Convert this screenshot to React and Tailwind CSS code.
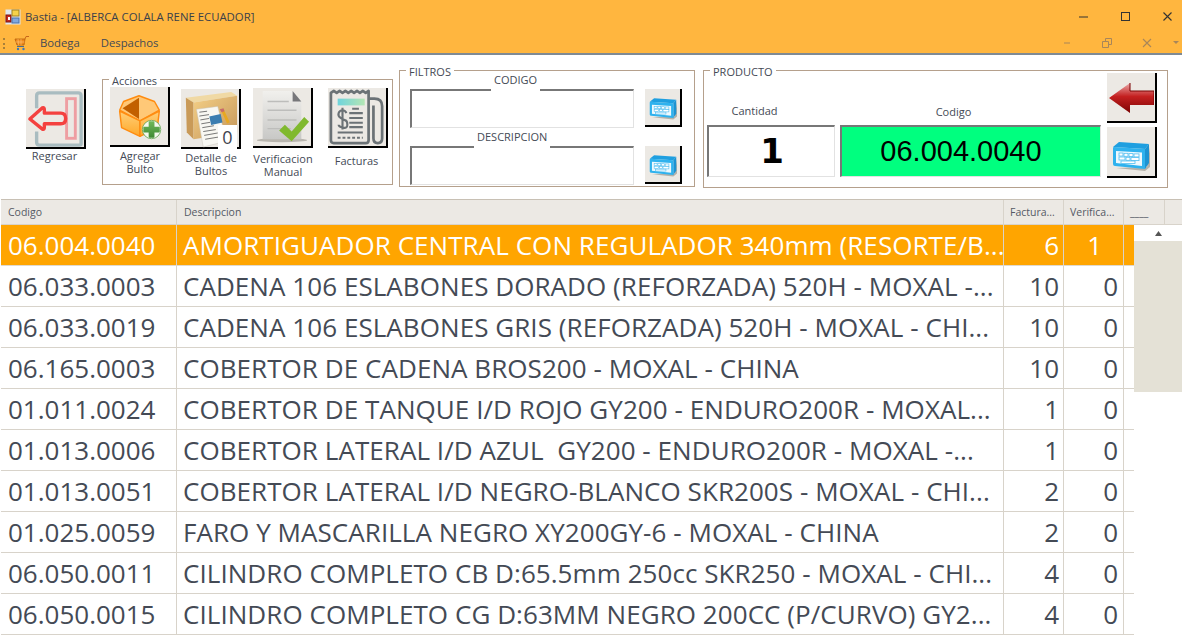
const font = { fontFamily: '"Open Sans", "Noto Sans", sans-serif' };

const rows = [
  ['06.004.0040', 'AMORTIGUADOR CENTRAL CON REGULADOR 340mm (RESORTE/B...', '6', '1'],
  ['06.033.0003', 'CADENA 106 ESLABONES DORADO (REFORZADA) 520H - MOXAL -...', '10', '0'],
  ['06.033.0019', 'CADENA 106 ESLABONES GRIS (REFORZADA) 520H - MOXAL - CHI...', '10', '0'],
  ['06.165.0003', 'COBERTOR DE CADENA BROS200 - MOXAL - CHINA', '10', '0'],
  ['01.011.0024', 'COBERTOR DE TANQUE I/D ROJO GY200 - ENDURO200R - MOXAL...', '1', '0'],
  ['01.013.0006', 'COBERTOR LATERAL I/D AZUL  GY200 - ENDURO200R - MOXAL -...', '1', '0'],
  ['01.013.0051', 'COBERTOR LATERAL I/D NEGRO-BLANCO SKR200S - MOXAL - CHI...', '2', '0'],
  ['01.025.0059', 'FARO Y MASCARILLA NEGRO XY200GY-6 - MOXAL - CHINA', '2', '0'],
  ['06.050.0011', 'CILINDRO COMPLETO CB D:65.5mm 250cc SKR250 - MOXAL - CHI...', '4', '0'],
  ['06.050.0015', 'CILINDRO COMPLETO CG D:63MM NEGRO 200CC (P/CURVO) GY2...', '4', '0'],
];

function AppIcon() {
  return (
    <svg width="16" height="16" viewBox="0 0 16 16">
      <rect x="0.5" y="0.5" width="15" height="15" fill="#dfe6ee" />
      <rect x="1" y="6" width="5" height="7" fill="#c8281e" stroke="#7a1510" />
      <rect x="3" y="8" width="2" height="3" fill="#fff" />
      <rect x="7" y="1" width="7" height="6" fill="#f6d24a" stroke="#a08020" />
      <rect x="7" y="9" width="7" height="5" fill="#7fa8e0" stroke="#4a70a8" />
    </svg>
  );
}

function CartIcon() {
  return (
    <svg width="16" height="16" viewBox="0 0 16 16">
      <path d="M1 4h10l-1 6H3z" fill="#f08a1c" stroke="#b85f0a" strokeWidth="0.8" />
      <path d="M4 4l.5 6M7 4v6M1.500 7h9" stroke="#ffc878" strokeWidth="0.6" />
      <path d="M11 4l1-2.500h3" fill="none" stroke="#c8681a" strokeWidth="1" />
      <path d="M3 11.500h7" stroke="#4a6a88" strokeWidth="1" />
      <circle cx="4" cy="14" r="1.200" fill="#3a78b8" />
      <circle cx="9.500" cy="14" r="1.200" fill="#3a78b8" />
    </svg>
  );
}

function BackIcon() {
  return (
    <svg width="60" height="60" viewBox="0 0 60 60">
      <path d="M11 20V7q0-3 3-3h40q3 0 3 3v50q0 1-2 1H14q-3 0-3-3V44" fill="none" stroke="#a9bcc0" strokeWidth="3.500" />
      <rect x="42" y="10" width="9" height="41" fill="#ece9e4" stroke="#ee9ea2" strokeWidth="3" />
      <path d="M4 31L17 19.500q2-1 2 2V25h17q5 0 5 5.500t-5 5.500H19v3.500q0 3-2 2z" fill="#ece9e4" stroke="#f4413f" strokeWidth="3.500" strokeLinejoin="round" />
    </svg>
  );
}

function BoxIcon() {
  return (
    <svg width="60" height="60" viewBox="0 0 60 60">
      <defs>
        <linearGradient id="boxFront" x1="0" y1="0" x2="0" y2="1">
          <stop offset="0" stopColor="#ffcf78" />
          <stop offset="1" stopColor="#ffa92a" />
        </linearGradient>
        <linearGradient id="plusFill" x1="0" y1="0" x2="0" y2="1">
          <stop offset="0" stopColor="#6fb85a" />
          <stop offset="1" stopColor="#3f8a34" />
        </linearGradient>
      </defs>
      <path d="M10 24l4-9 16-6 16 6 5 9-20 11z" fill="#ffc877" stroke="#ff8c10" strokeWidth="1.500" strokeLinejoin="round" />
      <path d="M13 22l17-11v22z" fill="#c26000" />
      <path d="M10 25l21 10v16l-19-9z" fill="url(#boxFront)" stroke="#ff8c10" strokeWidth="1.500" strokeLinejoin="round" />
      <path d="M31 35l20-10-2 17-18 9z" fill="url(#boxFront)" stroke="#ff8c10" strokeWidth="1.500" strokeLinejoin="round" />
      <circle cx="43" cy="44" r="9.500" fill="#f4f8ee" stroke="#5aa04a" strokeWidth="0.800" />
      <path d="M40 36.500q0-1 1-1h4q1 0 1 1V41h4.500q1 0 1 1v4q0 1-1 1H46v4.500q0 1-1 1h-4q-1 0-1-1V47h-4.500q-1 0-1-1v-4q0-1 1-1H40z" fill="url(#plusFill)" />
    </svg>
  );
}

function FolderIcon() {
  return (
    <svg width="60" height="60" viewBox="0 0 60 60">
      <defs>
        <linearGradient id="folderFill" x1="0" y1="0" x2="1" y2="1">
          <stop offset="0" stopColor="#f4cf86" />
          <stop offset="1" stopColor="#c4965a" />
        </linearGradient>
      </defs>
      <path d="M5 9L52 3l6 4-45 7z" fill="#f0d9a4" />
      <path d="M5 9l8 5v38l-7-7z" fill="#c99a58" />
      <path d="M13 14l45-7v38l-45 7z" fill="url(#folderFill)" />
      <path d="M16 21l22-3 9 36-24 6z" fill="#f8f7f2" stroke="#c8c4ba" strokeWidth="0.500" />
      <path d="M19 24l8-1M19 28l10-1.500M20 32l9-1.500M21 36l9-1.500M22 40l12-2M23 44l13-2M24 48l14-2.500M25 52l15-2.500" stroke="#666" strokeWidth="0.900" />
      <rect x="30" y="27" width="12" height="9" fill="#3b7db0" transform="rotate(-12 36 31)" />
      <path d="M43 22l6 13" stroke="#e8a820" strokeWidth="3" />
      <path d="M40 21l4-1 1 3-3 1z" fill="#c86a6a" />
    </svg>
  );
}

function CheckDocIcon() {
  return (
    <svg width="60" height="60" viewBox="0 0 60 60">
      <defs>
        <linearGradient id="docFill" x1="0" y1="0" x2="0" y2="1">
          <stop offset="0" stopColor="#f1f0ed" />
          <stop offset="1" stopColor="#c8c8c6" />
        </linearGradient>
      </defs>
      <ellipse cx="30" cy="54" rx="26" ry="2" fill="#b8b5ae" />
      <path d="M10 3h31l9 11v39H10z" fill="url(#docFill)" />
      <path d="M41 3l9 11h-9z" fill="#77777a" />
      <path d="M15 14h22M15 23h30M15 33h30M15 42h24" stroke="#bdbdbb" strokeWidth="1.500" />
      <path d="M27 44l6-6 7 7 13-15 5 5-18 20z" fill="#80b92e" />
    </svg>
  );
}

function ReceiptIcon() {
  return (
    <svg width="60" height="60" viewBox="0 0 60 60" fill="none" stroke="#6b7276">
      <defs>
        <linearGradient id="tealBar" x1="0" y1="0" x2="1" y2="0">
          <stop offset="0" stopColor="#6fd4dc" />
          <stop offset="1" stopColor="#b4e6b4" />
        </linearGradient>
      </defs>
      <path d="M3 5l3-2 3 2 3-2 3 2 3-2 3 2 3-2 3 2 3-2 3 2 3-2 3 2 3-2v51q0 3-3 3H6q-3 0-3-3z" strokeWidth="2.800" strokeLinejoin="round" />
      <path d="M42 11h6q8 0 8 8v33q0 5-4.500 5T47 52V18" strokeWidth="2.800" />
      <path d="M10 11h28v7H10z" fill="url(#tealBar)" stroke="none" />
      <path d="M25 21.500h7M22 26h14M22 31h14M22 36h14M22 40.500h14M10 46h26" strokeWidth="2.200" />
      <path d="M10 51.500h26" strokeWidth="2.200" strokeDasharray="3 2" />
      <path d="M19 26q-1-3-4-3t-4 3 2 5 5 2.500 2 4.500-4.500 3-4.500-3M15 20.500v22.500" strokeWidth="2.200" />
    </svg>
  );
}

function KeyboardIcon({ width = 38, height = 30 }) {
  return (
    <svg width={width} height={height} viewBox="0 0 38 30">
      <path d="M4 27l29 3 5-4V6l-3 20z" fill="#b4b2aa" />
      <path d="M1 6l6-5 30 2-4 5z" fill="#1f9fe0" />
      <path d="M33 8l4-5v19l-4 6z" fill="#1c93d2" />
      <path d="M1 7q0-1 1-1l31 2v20L3 25q-2 0-2-2z" fill="#2fb2ee" />
      <path d="M4 10l26 1.500V25L4 22z" fill="#eef9fe" />
      <g fill="#fff" stroke="#4fbdf0" strokeWidth="0.800">
        <rect x="7" y="12" width="4" height="3" />
        <rect x="12" y="12.300" width="4" height="3" />
        <rect x="17" y="12.600" width="4" height="3" />
        <rect x="22" y="12.900" width="5" height="3" />
        <rect x="7" y="16" width="6" height="3" />
        <rect x="14" y="16.300" width="4" height="3" />
        <rect x="19" y="16.600" width="8" height="3" />
        <rect x="9" y="20" width="14" height="2.500" />
      </g>
    </svg>
  );
}

function RedArrowIcon() {
  return (
    <svg width="46" height="32" viewBox="0 0 46 32">
      <defs>
        <linearGradient id="arrowFill" x1="0" y1="0" x2="0" y2="1">
          <stop offset="0" stopColor="#eaa8a8" />
          <stop offset="0.450" stopColor="#c42020" />
          <stop offset="1" stopColor="#7c0404" />
        </linearGradient>
      </defs>
      <path d="M1 16L22 1v8h24v14H22v8z" fill="url(#arrowFill)" />
      <path d="M22 1v8h24M46 9v14" fill="none" stroke="#7a0000" />
    </svg>
  );
}

// boton con relieve estilo WinForms
function ToolButton({ className, children }) {
  return (
    <div className={`flex items-center justify-center bg-[#ece9e4] border-r-2 border-b-2 border-black ${className}`}>
      {children}
    </div>
  );
}

function Action({ icon, label, className, labelClass, badge }) {
  return (
    <div className={`flex flex-col items-center ${className}`}>
      <div className="relative">
        <ToolButton className="w-[60px] h-[60px] box-border">{icon}</ToolButton>
        {badge && (
          <span className="absolute right-[4px] bottom-0 w-[19px] h-[24px] bg-white text-[18px] leading-[24px] text-center text-[#3f4450]">
            {badge}
          </span>
        )}
      </div>
      <div className={`text-[11px] leading-[13px] text-center text-[#444a55] whitespace-pre-line ${labelClass}`}>{label}</div>
    </div>
  );
}

function Group({ title, className, children }) {
  return (
    <div className={`relative border border-[#b5a08c] box-border ${className}`}>
      <span className="absolute left-[6px] -top-[6px] bg-white px-[3px] text-[11px] leading-[14px] text-[#444a55]">{title}</span>
      {children}
    </div>
  );
}

function FilterInput({ label, labelClass }) {
  return (
    <div className="relative w-[224px] h-[39px] border-t-2 border-l-2 border-t-[#777] border-l-[#777] border-r border-b border-r-[#e2e2e2] border-b-[#e2e2e2] bg-white box-border">
      <span className={`absolute -top-[18px] bg-white text-[11px] leading-[14px] px-[3px] pb-[6px] text-[#444a55] ${labelClass}`}>{label}</span>
    </div>
  );
}

function Cell({ className, children }) {
  return <div className={`h-full flex items-center border-r overflow-hidden whitespace-pre ${className}`}>{children}</div>;
}

export default function App() {
  return (
    <div className="w-[1182px] h-[638px] overflow-hidden bg-white flex flex-col" style={font}>
      {/* titulo */}
      <div className="h-[33px] bg-[#ffb63f] flex items-center pl-[5px] shrink-0">
        <AppIcon />
        <span className="ml-[4px] text-[11.350px] text-[#3a3f4a] font-medium">Bastia - [ALBERCA COLALA RENE ECUADOR]</span>
        <div className="ml-auto flex items-center gap-[31px] pr-[9px] text-[#222]">
          <svg width="11" height="11" viewBox="0 0 11 11"><path d="M1 6h9" stroke="#333" strokeWidth="1" /></svg>
          <svg width="11" height="11" viewBox="0 0 11 11"><rect x="1.500" y="1.500" width="8" height="8" fill="none" stroke="#333" strokeWidth="1" /></svg>
          <svg width="11" height="11" viewBox="0 0 11 11"><path d="M1.500 1.500l8 8M9.500 1.500l-8 8" stroke="#333" strokeWidth="1.100" /></svg>
        </div>
      </div>

      {/* menu */}
      <div className="h-[22px] bg-[#ffb63f] border-b-2 border-b-[#7f8a94] flex items-center pl-[3px] shrink-0 box-border">
        <div className="w-[2px] h-[11px] border-l-2 border-dotted border-[#a8803a]" />
        <span className="ml-[9px]"><CartIcon /></span>
        <span className="ml-[10px] text-[11.300px] text-[#444a55]">Bodega</span>
        <span className="ml-[21px] text-[11.300px] text-[#444a55]">Despachos</span>
        <div className="ml-auto flex items-center gap-[30px] pr-[2px]">
          <svg width="10" height="10" viewBox="0 0 10 10"><path d="M2 5h6" stroke="#a8865a" /></svg>
          <svg width="10" height="10" viewBox="0 0 10 10" fill="none" stroke="#a8865a"><path d="M.5 3.500h6v6h-6zM3.500 3V.5h6v6H7" /></svg>
          <svg width="10" height="10" viewBox="0 0 10 10"><path d="M1 1l8 8M9 1l-8 8" stroke="#a8865a" strokeWidth="1.100" /></svg>
          <svg className="-ml-[9px]" width="7" height="4" viewBox="0 0 7 4"><path d="M0 0h6L3 3z" fill="#a8865a" /></svg>
        </div>
      </div>

      {/* barra de acciones */}
      <div className="h-[144px] flex items-start shrink-0">
        <Action icon={<BackIcon />} label="Regresar" className="ml-[26px] mt-[34px] w-[60px]" labelClass="mr-[3px]" />

        <Group title="Acciones" className="ml-[16px] mt-[24px] w-[291px] h-[106px] flex items-start">
          <Action icon={<BoxIcon />} label={'Agregar\nBulto'} className="ml-[7px] mt-[7px] w-[60px]" labelClass="mt-[2px]" />
          <Action icon={<FolderIcon />} label={'Detalle de\nBultos'} className="ml-[11px] mt-[9px] w-[60px]" labelClass="mt-[2px]" badge="0" />
          <Action icon={<CheckDocIcon />} label={'Verificacion\nManual'} className="ml-[12px] mt-[8px] w-[60px]" labelClass="mt-[4px]" />
          <Action icon={<ReceiptIcon />} label="Facturas" className="ml-[15px] mt-[8px] w-[60px]" labelClass="mt-[6px] -ml-[3px]" />
        </Group>

        <Group title="FILTROS" className="ml-[6px] mt-[15px] w-[296px] h-[117px] pl-[10px] pt-[18px] flex flex-col gap-[18px]">
          <div className="flex items-start gap-[11px]">
            <FilterInput label="CODIGO" labelClass="left-[79px]" />
            <ToolButton className="w-[37px] h-[38px] box-border pt-[3px]"><KeyboardIcon width={28} height={23} /></ToolButton>
          </div>
          <div className="flex items-start gap-[11px]">
            <FilterInput label="DESCRIPCION" labelClass="left-[62px]" />
            <ToolButton className="w-[37px] h-[38px] box-border pt-[3px]"><KeyboardIcon width={28} height={23} /></ToolButton>
          </div>
        </Group>

        <Group title="PRODUCTO" className="ml-[8px] mt-[15px] w-[465px] h-[118px] pl-[3px] flex items-start">
          <div className="w-[128px] mt-[33px] flex flex-col items-center">
            <span className="text-[11px] leading-[14px] text-[#444a55] mr-[33px]">Cantidad</span>
            <div className="mt-[7px] w-[128px] h-[52px] border-t-2 border-l-2 border-t-[#777] border-l-[#777] border-r border-b border-r-[#e2e2e2] border-b-[#e2e2e2] box-border flex items-center justify-center pl-[1px] text-[34px] font-bold text-black" style={{ fontFamily: '"DejaVu Sans", sans-serif' }}>
              1
            </div>
          </div>
          <div className="w-[261px] ml-[5px] mt-[34px] flex flex-col items-center">
            <span className="text-[11px] leading-[14px] text-[#444a55] mr-[34px]">Codigo</span>
            <div className="mt-[6px] w-[261px] h-[52px] bg-[#00ff7f] border-t-2 border-l-2 border-t-[#777] border-l-[#777] border-r border-b border-r-[#e2e2e2] border-b-[#e2e2e2] box-border flex items-center justify-center pr-[20px] text-[29px] text-black" style={{ fontFamily: '"Liberation Sans", sans-serif' }}>
              06.004.0040
            </div>
          </div>
          <div className="ml-[6px] mt-[2px] flex flex-col gap-[4px]">
            <ToolButton className="w-[50px] h-[50px] box-border pt-[2px]"><RedArrowIcon /></ToolButton>
            <ToolButton className="w-[50px] h-[51px] box-border pt-[9px]"><KeyboardIcon /></ToolButton>
          </div>
        </Group>
      </div>

      {/* grilla */}
      <div className="flex-1 flex flex-col overflow-hidden pl-[1px] min-h-0">
        <div className="h-[26px] shrink-0 bg-[#ece9e4] border-t border-b border-t-[#c8c0b4] border-b-[#d8d3ca] box-border flex text-[10.500px] text-[#555a64]">
          <Cell className="w-[176px] pl-[7px] pt-[1px] border-[#d8d3ca]">Codigo</Cell>
          <Cell className="w-[827px] pl-[7px] pt-[1px] border-[#d8d3ca]">Descripcion</Cell>
          <Cell className="w-[60px] pl-[6px] pt-[1px] border-[#d8d3ca]">Factura...</Cell>
          <Cell className="w-[60px] pl-[6px] pt-[1px] border-[#d8d3ca]">Verifica...</Cell>
          <Cell className="w-[41px] pl-[6px] pt-[1px] border-[#d8d3ca]">____</Cell>
          <div className="flex-1" />
        </div>
        <div className="flex-1 flex min-h-0">
          <div className="w-[1133px] shrink-0">
            {rows.map((r, i) => (
              <div
                key={r[0]}
                className={`h-[41px] box-border border-b flex text-[26px] ${i === 0 ? 'bg-[#ffa500] text-white border-[#e0d9ce]' : 'bg-white text-[#444a55] border-[#d8d3ca]'}`}
              >
                <Cell className="w-[176px] pl-[7px] pt-[1px] border-[#d8d3ca]">{r[0]}</Cell>
                <Cell className="w-[827px] pl-[6px] pt-[1px] tracking-[0.06px] border-[#d8d3ca]">{r[1]}</Cell>
                <Cell className="w-[60px] justify-end pr-[4px] pt-[1px] border-[#d8d3ca]">{r[2]}</Cell>
                <Cell className={`w-[60px] justify-end pt-[1px] border-[#d8d3ca] ${i === 0 ? 'pr-[21px]' : 'pr-[5px]'}`}>
                  {r[3]}
                </Cell>
                <div className="flex-1" />
              </div>
            ))}
          </div>
          {/* scroll */}
          <div className="flex-1 flex flex-col">
            <div className="h-[16px] flex items-center justify-center pl-[1px]">
              <svg width="7" height="5" viewBox="0 0 7 5"><path d="M3.500 0L7 5H0z" fill="#555" /></svg>
            </div>
            <div className="h-[151px] bg-[#e4e1d6]" />
          </div>
        </div>
      </div>
    </div>
  );
}
